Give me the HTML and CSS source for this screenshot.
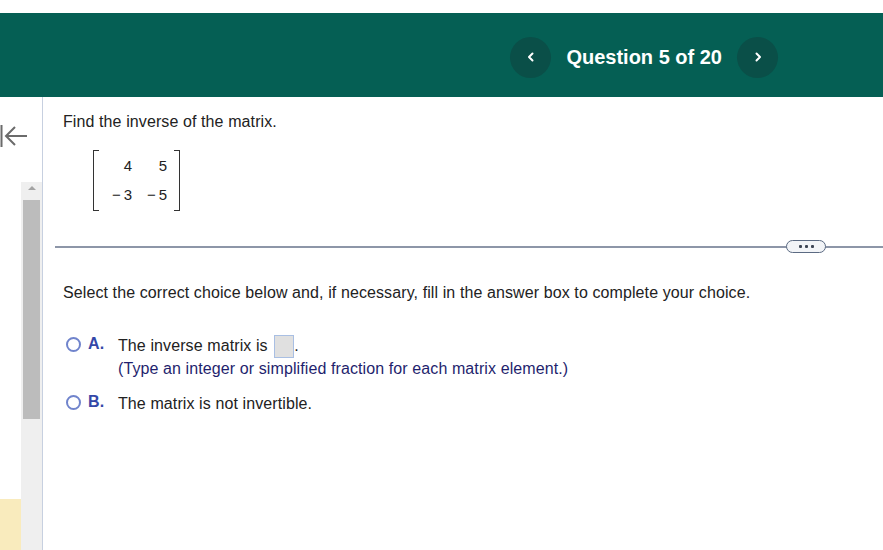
FILE: index.html
```html
<!DOCTYPE html>
<html lang="en">
<head>
    <meta charset="UTF-8">
    <title>Question 5 of 20</title>
    <link rel="stylesheet" href="styles.css">
</head>
<body>
    <header class="topbar">
        <div class="qnav">
            <button class="nav-btn" aria-label="Previous">
                <svg width="12" height="12" viewBox="0 0 12 12"><path d="M7.5 2.5 L4 6 L7.5 9.5" fill="none" stroke="#fff" stroke-width="2" stroke-linecap="round" stroke-linejoin="round"/></svg>
            </button>
            <span class="qtitle">Question 5 of 20</span>
            <button class="nav-btn" aria-label="Next">
                <svg width="12" height="12" viewBox="0 0 12 12"><path d="M4.5 2.5 L8 6 L4.5 9.5" fill="none" stroke="#fff" stroke-width="2" stroke-linecap="round" stroke-linejoin="round"/></svg>
            </button>
        </div>
    </header>

    <div class="main">
        <aside class="sidebar">
            <div class="collapse">
                <svg width="28" height="28" viewBox="0 0 28 28"><path d="M1.5 3 V25 M27 14 H6 M15 5 L6 14 L15 23" fill="none" stroke="#6b6b6b" stroke-width="2"/></svg>
            </div>
            <div class="side-lower">
                <div class="side-left">
                    <div class="note-tab"></div>
                </div>
                <div class="track">
                    <div class="track-arrow"></div>
                    <div class="thumb"></div>
                </div>
            </div>
        </aside>

        <section class="content">
            <p class="prompt">Find the inverse of the matrix.</p>
            <div class="matrix">
                <span class="bracket left"></span>
                <div class="cells">
                    <span>4</span><span>5</span>
                    <span>&minus;&thinsp;3</span><span>&minus;&thinsp;5</span>
                </div>
                <span class="bracket right"></span>
            </div>

            <div class="divider">
                <span class="more"><i></i><i></i><i></i></span>
            </div>

            <p class="instr">Select the correct choice below and, if necessary, fill in the answer box to complete your choice.</p>

            <div class="choices">
                <div class="choice">
                    <span class="radio"></span>
                    <span class="letter">A.</span>
                    <div class="choice-body">
                        <div>The inverse matrix is <span class="answer-box"></span>.</div>
                        <div class="hint">(Type an integer or simplified fraction for each matrix element.)</div>
                    </div>
                </div>
                <div class="choice">
                    <span class="radio"></span>
                    <span class="letter">B.</span>
                    <div class="choice-body">
                        <div>The matrix is not invertible.</div>
                    </div>
                </div>
            </div>
        </section>
    </div>
</body>
</html>
```

FILE: styles.css
```css
* {
    margin: 0;
    padding: 0;
    box-sizing: border-box;
}

html, body {
    height: 100%;
}

body {
    font-family: 'Liberation Sans', Arial, sans-serif;
    font-size: 16px;
    line-height: 18px;
    letter-spacing: 0.1px;
    color: #222;
    background: white;
    padding-top: 13px;
    display: flex;
    flex-direction: column;
    overflow: hidden;
}

.topbar {
    background: #055f54;
    height: 84px;
    display: flex;
    align-items: center;
    justify-content: flex-end;
    padding: 4px 105px 0 0;
}

.qnav {
    display: flex;
    align-items: center;
    gap: 14px;
}

.nav-btn {
    width: 41px;
    height: 41px;
    border-radius: 50%;
    border: none;
    background: #0a4f48;
    display: flex;
    align-items: center;
    justify-content: center;
}

.qtitle {
    color: white;
    font-weight: bold;
    font-size: 20px;
    line-height: 24px;
    letter-spacing: 0;
    padding: 0 1px;
}

.main {
    flex: 1;
    display: flex;
}

.sidebar {
    width: 43px;
    border-right: 1px solid #c7d0e0;
    display: flex;
    flex-direction: column;
}

.collapse {
    height: 85px;
    padding-top: 25px;
}

.collapse svg {
    display: block;
}

.side-lower {
    flex: 1;
    display: flex;
}

.side-left {
    width: 21px;
    display: flex;
    flex-direction: column;
    justify-content: flex-end;
}

.note-tab {
    height: 51px;
    background: #f9ebbd;
}

.track {
    width: 21px;
    background: #efefef;
    padding-top: 4px;
    display: flex;
    flex-direction: column;
    align-items: center;
}

.track-arrow {
    width: 0;
    height: 0;
    border-left: 4px solid transparent;
    border-right: 4px solid transparent;
    border-bottom: 4px solid #a3a3a3;
    margin-bottom: 10px;
}

.thumb {
    width: 17px;
    height: 219px;
    background: #bcbcbc;
}

.content {
    flex: 1;
    padding: 16px 0 0 12px;
}

.prompt,
.instr,
.choices {
    margin-left: 8px;
}

.matrix {
    display: inline-flex;
    align-items: stretch;
    margin: 19px 0 0 38px;
    height: 61px;
}

.bracket {
    width: 6px;
    border: 1.5px solid #333;
}

.bracket.left {
    border-right: none;
}

.bracket.right {
    border-left: none;
}

.cells {
    display: grid;
    grid-template-columns: 33px 35px;
    align-content: start;
    row-gap: 13px;
    padding: 8px 7px 0 0;
    font-size: 15px;
    line-height: 16px;
    letter-spacing: 0;
    text-align: right;
}

.divider {
    height: 2px;
    background: #8d96a8;
    margin-top: 31px;
    position: relative;
}

.more {
    position: absolute;
    left: 731px;
    top: -6px;
    width: 40px;
    height: 13px;
    border: 1.5px solid #5b6a82;
    border-radius: 7px;
    background: #f2f4f7;
    display: flex;
    align-items: center;
    justify-content: center;
    gap: 3px;
}

.more i {
    width: 3px;
    height: 3px;
    background: #3d4654;
    border-radius: 1px;
}

.instr {
    margin-top: 36px;
}

.choices {
    margin-top: 33px;
    display: flex;
    flex-direction: column;
    gap: 14px;
}

.choice {
    display: flex;
    align-items: flex-start;
}

.radio {
    width: 15px;
    height: 15px;
    border: 2px solid #7084cc;
    border-radius: 50%;
    margin: 2px 0 0 3px;
}

.letter {
    color: #3447a8;
    font-weight: bold;
    width: 37px;
    padding-left: 7px;
}

.choice-body {
    line-height: 21px;
}

.answer-box {
    display: inline-block;
    width: 20px;
    height: 23px;
    background: #e0e0e0;
    border: 1px solid #a9bfe3;
    vertical-align: -7px;
    margin-left: 2px;
}

.hint {
    color: #1f1f6e;
}
```
